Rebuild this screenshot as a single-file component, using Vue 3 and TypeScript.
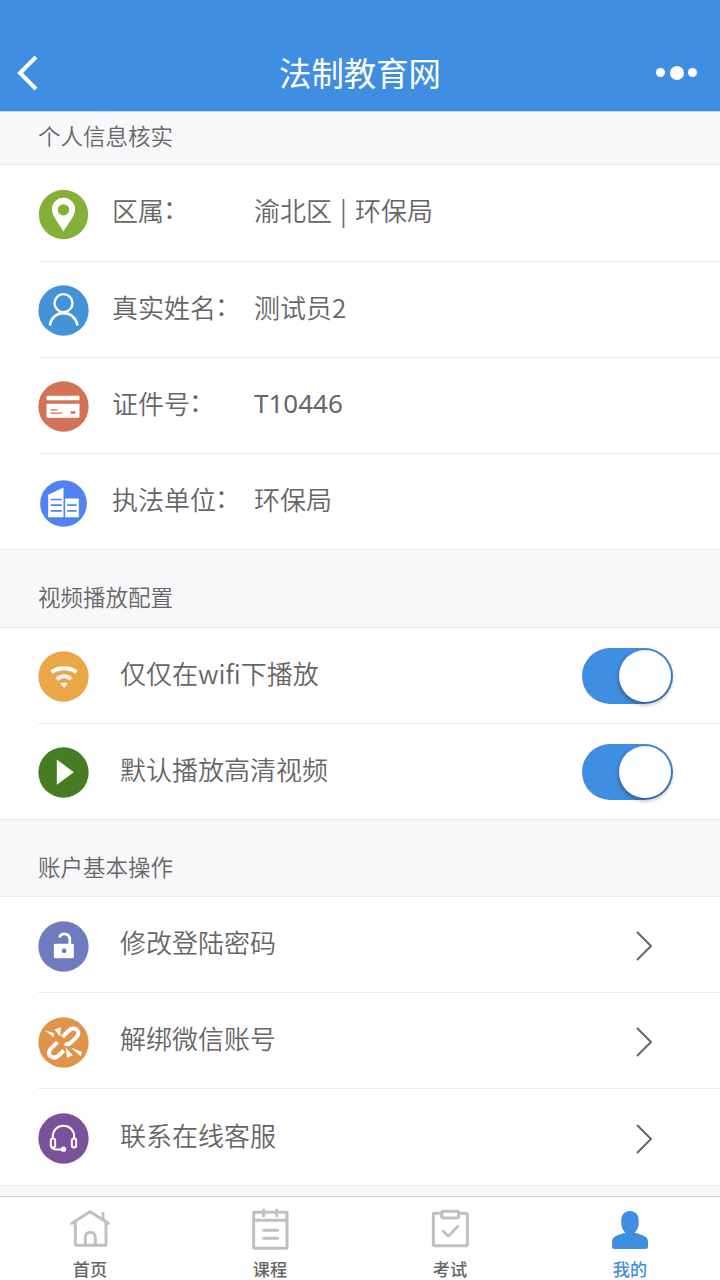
<script setup lang="ts">
interface Row {
  icon: string
  color: string
  radius?: number
  label: string
  value?: string
}

const profile: Row[] = [
  { icon: 'pin', color: '#83b137', radius: 74, label: '区属', value: '渝北区 | 环保局' },
  { icon: 'user', color: '#4493d8', label: '真实姓名', value: '测试员2' },
  { icon: 'card', color: '#d27256', label: '证件号', value: 'T10446' },
  { icon: 'building', color: '#5182f1', radius: 70, label: '执法单位', value: '环保局' },
]
const video: Row[] = [
  { icon: 'wifi', color: '#eaa747', label: '仅仅在wifi下播放' },
  { icon: 'play', color: '#467d22', label: '默认播放高清视频' },
]
const account: Row[] = [
  { icon: 'lock', color: '#707abe', label: '修改登陆密码' },
  { icon: 'unlink', color: '#de9449', label: '解绑微信账号' },
  { icon: 'headset', color: '#7b5299', label: '联系在线客服' },
]
const groups = [
  { kind: 'info', title: '个人信息核实', rows: profile },
  { kind: 'switch', title: '视频播放配置', rows: video },
  { kind: 'link', title: '账户基本操作', rows: account },
]
const tabs = [
  { icon: 'home', label: '首页' },
  { icon: 'course', label: '课程' },
  { icon: 'exam', label: '考试' },
  { icon: 'me', label: '我的' },
]
const isLatin = (s: string): boolean => /^[\w ]+$/.test(s)
</script>

<template>
  <div class="page">
    <header class="bar">
      <svg class="back" viewBox="0 0 22 36"><path d="M19 2 3 18l16 16" fill="none" stroke="#fff" stroke-width="4" /></svg>
      <h1>法制教育网</h1>
      <div class="more"><i></i><i class="big"></i><i></i></div>
    </header>

    <main>
      <section v-for="g in groups" :key="g.kind" :class="g.kind">
        <h2>{{ g.title }}</h2>
        <div class="rows">
          <div v-for="r in g.rows" :key="r.icon" class="row">
            <svg class="icon" viewBox="-76.5 -76.5 153 153" fill="#fff">
              <circle :r="r.radius ?? 75.5" :fill="r.color" />
              <g v-if="r.icon === 'pin'">
                <path d="M0 51C-12 30-35 3-35-15A35 35 0 0 1 35-15C35 3 12 30 0 51Z" />
                <circle cy="-14" r="17" :fill="r.color" />
              </g>
              <g v-else-if="r.icon === 'user'" fill="none" stroke="#fff" stroke-width="8">
                <circle cy="-22" r="27" stroke-width="7" />
                <path d="M-41 45C-37 20-20 8 0 8S37 20 42 45" />
              </g>
              <g v-else-if="r.icon === 'card'">
                <path d="M-51-19v-9q0-4 4-4h91q4 0 4 4v9zM-51-8H48v38q0 4-4 4h-91q-4 0-4-4z" />
                <path d="M-39 10h21M-39 20h35" :stroke="r.color" stroke-width="4" />
                <rect x="21" y="14" width="15" height="8" rx="3" :fill="r.color" />
              </g>
              <g v-else-if="r.icon === 'building'">
                <path d="M-46-26 0-48V41h-46zM5-15h41v56H5z" />
                <path d="M-38-12h33M-38 5h33M-38 22h33M11 5h28M11 22h28" :stroke="r.color" stroke-width="5" />
              </g>
              <g v-else-if="r.icon === 'wifi'">
                <path d="M-36-13C-15-29 18-29 39-13M-20 8C-6-4 11-4 23 8" fill="none" stroke="#fff" stroke-width="12" />
                <path d="M-9 22Q2 14 12 22L2 34Z" />
              </g>
              <path v-else-if="r.icon === 'play'" d="M-20-39 31-1-20 37Z" />
              <g v-else-if="r.icon === 'lock'">
                <path d="M-12-27C-10-34-6-38 1-38 13-38 19-31 19-20V-4" fill="none" stroke="#fff" stroke-width="8" />
                <rect x="-29" y="-8" width="60" height="43" rx="4" />
                <circle cx="2" cy="13" r="7" :fill="r.color" />
              </g>
              <g v-else-if="r.icon === 'unlink'">
                <path
                  d="M-3-17 13-33C23-43 34-45 41-37 48-28 44-21 36-13L20 2Q12 8 4 3M-18-1-36 16C-45 25-47 32-40 40-32 47-23 47-14 39L1 24"
                  fill="none" stroke="#fff" stroke-width="12"
                />
                <path d="M-56-37-28-28-30-16ZM-27-39-8-46-10-18ZM6 14 28 38 11 46ZM22 15 56 29 52 42Z" />
              </g>
              <g v-else fill="none" stroke="#fff" stroke-width="6">
                <path d="M-32 0V-6C-32-25-18-38 0-38S32-25 32-6V0" />
                <rect x="-38" y="0" width="13" height="27" rx="6" />
                <rect x="25" y="0" width="13" height="27" rx="6" />
                <path d="M-36 24Q-34 33-22 33H0" />
                <circle cy="32" r="5" fill="#fff" />
              </g>
            </svg>
            <span class="label">{{ r.label }}<span v-if="r.value" class="colon">：</span></span>
            <span v-if="r.value" class="value" :class="{ latin: isLatin(r.value) }">{{ r.value }}</span>
            <span v-if="g.kind === 'switch'" class="toggle"><i></i></span>
            <svg v-if="g.kind === 'link'" class="chevron" viewBox="0 0 18 32"><path d="m2 2 14 14L2 30" fill="none" stroke="#666" stroke-width="2" /></svg>
          </div>
        </div>
      </section>
    </main>

    <nav>
      <a v-for="t in tabs" :key="t.icon" :class="{ active: t.icon === 'me' }">
        <svg viewBox="0 0 126 132" fill="none" stroke="#c0c0c0" stroke-width="9" stroke-linecap="round" stroke-linejoin="round">
          <path v-if="t.icon === 'home'" d="M9 46 63 11 118 46M102 16V35M19 43V108Q19 112 23 112H107Q111 112 111 108V43M49 110V87C49 68 79 68 79 87V110" />
          <path v-else-if="t.icon === 'course'" d="M14 13H112Q114 13 114 17V117Q114 121 110 121H18Q14 121 14 117V17Q14 13 18 13ZM14 37H114M44 6V23M83 6V23M44 67H86M44 91H86" />
          <g v-else-if="t.icon === 'exam'">
            <path d="M40 16H15Q13 16 13 20V109Q13 113 17 113H111Q115 113 115 109V20Q115 16 111 16H88" />
            <rect x="38" y="10" width="51" height="20" rx="5" />
            <path d="M42 69 58 85 86 55" stroke-width="8" />
          </g>
          <path v-else stroke="none" fill="#3f8ee2" d="M63 9C79 9 89 20 89 35V47C89 59 83 68 77 74 102 81 117 85 117 101V117Q117 123 110 123H16Q9 123 9 117V101C9 85 24 81 49 74 43 68 37 59 37 47V35C37 20 47 9 63 9Z" />
        </svg>
        <span>{{ t.label }}</span>
      </a>
    </nav>
  </div>
</template>

<style>
body { margin: 0; }
</style>

<style scoped>
* { box-sizing: border-box; }
.page {
  width: 720px;
  height: 1280px;
  display: flex;
  flex-direction: column;
  overflow: hidden;
  background: #f8f8fb;
  color: #666;
  font-family: "Noto Sans CJK SC", sans-serif;
  font-weight: 350;
}
.bar {
  flex: none;
  height: 112px;
  padding: 34px 23px 0 17px;
  display: grid;
  grid-template-columns: 60px 1fr 54px;
  align-items: center;
  background: #3f8ee2;
  border-bottom: 1px solid #b9d5f4;
  color: #fff;
}
.back { width: 22px; height: 36px; }
h1 { margin: -1px 0 0; font-size: 32.4px; line-height: 48px; font-weight: 400; text-align: center; }
.more { display: flex; align-items: center; justify-content: flex-end; gap: 4.5px; }
.more i { width: 9px; height: 9px; border-radius: 50%; background: #fff; }
.more .big { width: 14px; height: 14px; }
main { flex: 1; min-height: 0; overflow: hidden; }
h2 {
  margin: 0;
  height: 76.2px;
  padding: 29px 38px 0;
  font-size: 22.5px;
  line-height: 34px;
  font-weight: inherit;
}
.info h2 { height: 52.4px; padding-top: 6px; }
.link h2 { height: 76px; padding-top: 28.8px; }
.rows { background: #fff; border-top: 1px solid #ececee; border-bottom: 1px solid #ececee; padding-left: 38px; }
.row { height: 96.2px; display: flex; align-items: center; padding-top: 3px; border-bottom: 1px solid #ececee; }
.row:last-child { height: 95.4px; border-bottom: 0; }
.icon { flex: none; width: 51px; height: 51px; }
.label, .value { font-size: 26px; line-height: 40px; white-space: nowrap; transform: translateY(-4px); }
.label { margin-left: 31px; }
.info .label { margin-left: 23px; width: 142px; }
.colon { display: inline-block; transform: translate(-1px, -2px); }
.value { word-spacing: 2.2px; }
.latin { font-family: "Noto Sans", "Noto Sans CJK SC", sans-serif; font-weight: 400; }
.toggle {
  width: 91px;
  height: 56px;
  margin: -2px 47px 0 auto;
  padding: 2px;
  border-radius: 28px;
  background: #3f8ee2;
  display: flex;
  justify-content: flex-end;
}
.toggle i { width: 52px; height: 52px; border-radius: 50%; background: #fff; box-shadow: 0 2px 5px rgba(0, 0, 0, .4); }
.chevron { width: 18px; height: 32px; margin: 0 67px 0 auto; }
nav { flex: none; height: 84px; border-top: 1px solid #ccc; background: #fff; display: flex; }
nav a { flex: 1; display: flex; flex-direction: column; align-items: center; padding-top: 11px; }
nav svg { flex: none; width: 42px; height: 44px; }
nav span { margin-top: 3.5px; font-size: 17.2px; line-height: 26px; font-weight: 500; }
nav .active { color: #3f8ee2; }
</style>
